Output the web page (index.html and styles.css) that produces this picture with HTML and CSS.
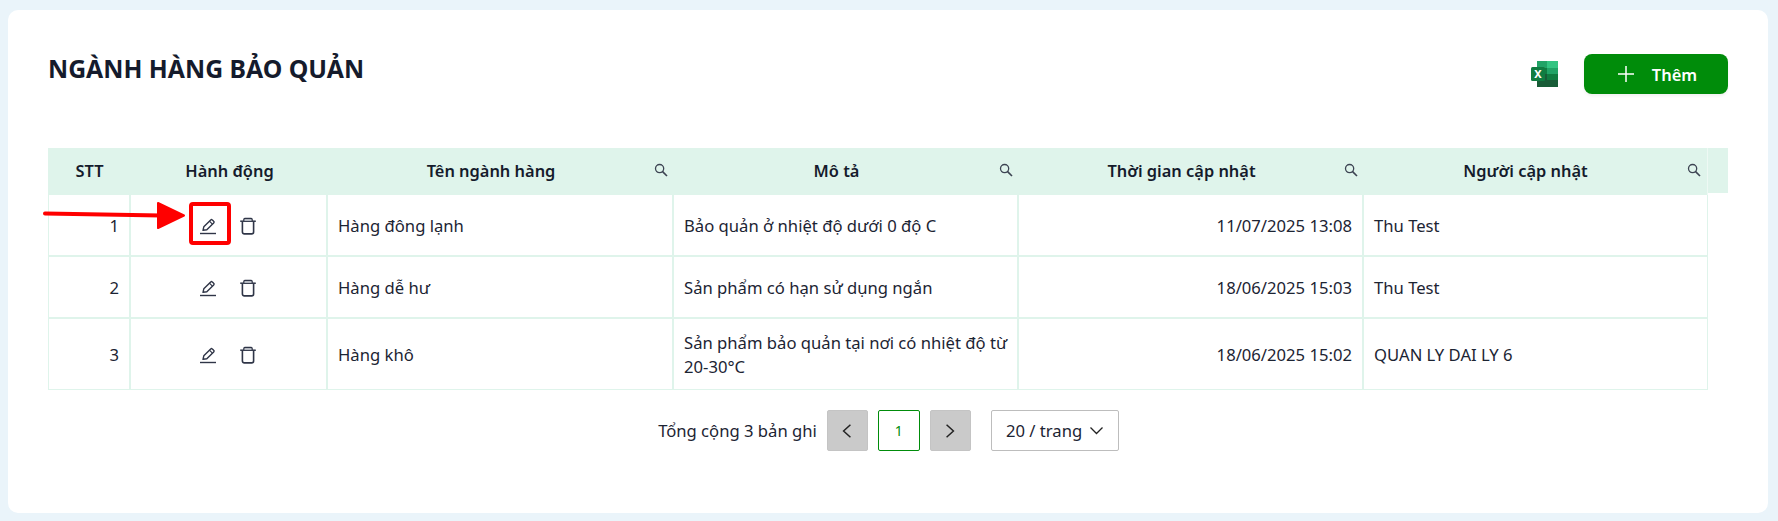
FILE: index.html
```html
<!DOCTYPE html>
<html lang="vi">
<head>
<meta charset="utf-8">
<title>Ngành hàng bảo quản</title>
<link rel="stylesheet" href="styles.css">
</head>
<body>
<svg class="defs" width="0" height="0" aria-hidden="true">
  <symbol id="i-search" viewBox="0 0 14 14"><circle cx="5.6" cy="5.6" r="4.1" fill="none" stroke="currentColor" stroke-width="1.3"/><path d="M8.600 8.600 13 13" stroke="currentColor" stroke-width="1.600" fill="none"/></symbol>
  <symbol id="i-edit" viewBox="0 0 18 18"><path d="M1 16.500H17" stroke="currentColor" stroke-width="1.400" fill="none"/><path d="M4 13.300 4.800 9.800 11.700 2.900a1.100 1.100 0 0 1 1.600 0l1.400 1.400a1.100 1.100 0 0 1 0 1.600L7.800 12.700Z" stroke="currentColor" stroke-width="1.400" fill="none" stroke-linejoin="round"/><path d="M10.400 4.200 13.400 7.200" stroke="currentColor" stroke-width="1.200"/></symbol>
  <symbol id="i-trash" viewBox="0 0 18 18"><path d="M1.200 4.200H16.800" stroke="currentColor" stroke-width="1.500" fill="none"/><path d="M4.800 4V2.400A1 1 0 0 1 5.800 1.400H12.200A1 1 0 0 1 13.200 2.400V4" fill="#b4b8c0" stroke="currentColor" stroke-width="1.200"/><path d="M3.400 4.400V15A1.900 1.900 0 0 0 5.300 16.900H12.700A1.900 1.900 0 0 0 14.600 15V4.400" stroke="currentColor" stroke-width="1.600" fill="none"/></symbol>
</svg>
<main class="card">
  <header class="top">
    <h1 class="title">NGÀNH HÀNG BẢO QUẢN</h1>
    <div class="actions">
      <svg class="excel" viewBox="0 0 27 26" aria-label="Excel">
        <rect x="6" y="0" width="21" height="26" rx="1.500" fill="#21a366"/>
        <rect x="16" y="0" width="11" height="7" fill="#33c481"/>
        <rect x="6" y="0" width="10" height="7" fill="#21a366"/>
        <rect x="16" y="7" width="11" height="6" fill="#21a366"/>
        <rect x="6" y="7" width="10" height="6" fill="#107c41"/>
        <rect x="16" y="13" width="11" height="6" fill="#107c41"/>
        <rect x="6" y="13" width="10" height="6" fill="#185c37"/>
        <rect x="6" y="19" width="21" height="7" fill="#185c37"/>
        <rect x="0" y="6" width="14" height="14" rx="1.500" fill="#107c41"/>
        <text x="7" y="17" class="excel-x">X</text>
      </svg>
      <button class="add" type="button">
        <svg class="plus" viewBox="0 0 16 16"><path d="M8 0V16M0 8H16" stroke="#fff" stroke-width="1.500"/></svg>
        <span>Thêm</span>
      </button>
    </div>
  </header>

  <table class="grid">
    <colgroup>
      <col class="c-stt"><col class="c-act"><col class="c-name"><col class="c-desc"><col class="c-time"><col class="c-user"><col class="c-gap">
    </colgroup>
    <thead>
      <tr>
        <th>STT</th>
        <th>Hành động</th>
        <th><span>Tên ngành hàng</span><svg class="search"><use href="#i-search"/></svg></th>
        <th><span>Mô tả</span><svg class="search"><use href="#i-search"/></svg></th>
        <th><span>Thời gian cập nhật</span><svg class="search"><use href="#i-search"/></svg></th>
        <th class="last"><span>Người cập nhật</span><svg class="search"><use href="#i-search"/></svg></th>
        <th class="gap"></th>
      </tr>
    </thead>
    <tbody>
      <tr class="r1">
        <td class="num">1</td>
        <td class="ops"><div class="ops-in"><svg class="ic"><use href="#i-edit"/></svg><svg class="ic"><use href="#i-trash"/></svg></div></td>
        <td>Hàng đông lạnh</td>
        <td>Bảo quản ở nhiệt độ dưới 0 độ C</td>
        <td class="num">11/07/2025 13:08</td>
        <td>Thu Test</td>
      </tr>
      <tr class="r2">
        <td class="num">2</td>
        <td class="ops"><div class="ops-in"><svg class="ic"><use href="#i-edit"/></svg><svg class="ic"><use href="#i-trash"/></svg></div></td>
        <td>Hàng dễ hư</td>
        <td>Sản phẩm có hạn sử dụng ngắn</td>
        <td class="num">18/06/2025 15:03</td>
        <td>Thu Test</td>
      </tr>
      <tr class="r3">
        <td class="num">3</td>
        <td class="ops"><div class="ops-in"><svg class="ic"><use href="#i-edit"/></svg><svg class="ic"><use href="#i-trash"/></svg></div></td>
        <td>Hàng khô</td>
        <td>Sản phẩm bảo quản tại nơi có nhiệt độ từ 20-30°C</td>
        <td class="num">18/06/2025 15:02</td>
        <td>QUAN LY DAI LY 6</td>
      </tr>
    </tbody>
  </table>

  <nav class="pager">
    <span class="total">Tổng cộng 3 bản ghi</span>
    <button class="pg nav" type="button"><svg viewBox="0 0 12 14"><path d="M9 1.500 3 7l6 5.500" fill="none" stroke="#222" stroke-width="1.300"/></svg></button>
    <button class="pg current" type="button">1</button>
    <button class="pg nav" type="button"><svg viewBox="0 0 12 14"><path d="M3 1.500 9 7l-6 5.500" fill="none" stroke="#222" stroke-width="1.300"/></svg></button>
    <button class="size" type="button"><span>20 / trang</span><svg viewBox="0 0 14 10"><path d="M1 1.500 7 7.500l6-6" fill="none" stroke="#222" stroke-width="1.300"/></svg></button>
  </nav>

  <svg class="note" viewBox="0 0 240 60" aria-hidden="true">
    <path d="M2 13.500 118 15.500" stroke="#f00" stroke-width="4" stroke-linecap="round"/>
    <path d="M115 3 141 15.500 115 28Z" fill="#f00" stroke="#f00" stroke-width="2" stroke-linejoin="round"/>
    <rect x="148" y="4" width="38" height="39" rx="2" fill="none" stroke="#f00" stroke-width="4"/>
  </svg>
</main>
</body>
</html>
```

FILE: styles.css
```css
* { box-sizing: border-box; }
html, body { height: 100%; }
body {
  margin: 0;
  padding: 10px 10px 8px 8px;
  background: #eaf4fa;
  font-family: "Noto Sans", "Open Sans", sans-serif;
  font-size: 16.65px;
  color: #1c2433;
  overflow: hidden;
}
.defs { position: absolute; }
.card {
  position: relative;
  height: 503px;
  background: #fff;
  border-radius: 10px;
  padding: 44px 40px 0;
}
.top {
  display: flex;
  justify-content: space-between;
  align-items: flex-start;
  height: 94px;
}
.title {
  margin: 0;
  font-size: 24.8px;
  line-height: 28px;
  font-weight: 700;
  color: #151b2c;
}
.actions {
  display: flex;
  align-items: center;
  gap: 26px;
}
.excel { width: 27px; height: 26px; display: block; }
.excel-x { font: 700 11px "Noto Sans", sans-serif; fill: #fff; text-anchor: middle; }
.add {
  display: flex;
  align-items: center;
  justify-content: center;
  gap: 18px;
  width: 144px;
  height: 40px;
  padding: 0 0 0 3px;
  border: 0;
  border-radius: 8px;
  background: #008c0a;
  color: #fff;
  font: 600 16.5px "Noto Sans", sans-serif;
  box-shadow: 0 2px 3px rgba(0, 0, 0, .06);
}
.plus { width: 16px; height: 16px; }

.grid {
  table-layout: fixed;
  width: 1680px;
  border-collapse: separate;
  border-spacing: 0;
}
.c-stt { width: 83px; }
.c-act { width: 197px; }
.c-name { width: 346px; }
.c-desc { width: 345px; }
.c-time { width: 345px; }
.c-user { width: 344px; }
.c-gap { width: 20px; }

th {
  position: relative;
  height: 47px;
  padding: 0 28px 2px 8px;
  background: #dff4eb;
  font-weight: 600;
  font-size: 16.4px;
  text-align: center;
  color: #151b2c;
}
th:nth-child(-n+2) { padding: 0 0 2px; }
th.last { border-right: 1px solid #eef9f4; }
th.gap { background: linear-gradient(#dff4eb 45px, #fff 45px); padding: 0; }
.search {
  position: absolute;
  right: 6px;
  top: 15px;
  width: 14px;
  height: 14px;
  color: #3c4352;
}
td {
  padding: 8px 7px 8px 10px;
  border: 1px solid #dff4eb;
  border-top: 0;
  border-left: 0;
  line-height: 24px;
  border-right-width: 2px;
}
td:first-child { border-left: 1px solid #dff4eb; }
td:last-child { border-right-width: 1px; }
tbody tr td { border-bottom-width: 2px; }
tbody tr:last-child td { border-bottom-width: 1px; }
.r1 td, .r2 td { height: 62px; padding-top: 9px; padding-bottom: 7px; }
.r3 td { height: 71px; padding-top: 9px; padding-bottom: 7px; }
td.num { text-align: right; padding-right: 10px; }
.ops-in {
  display: flex;
  justify-content: center;
  gap: 22px;
  padding-right: 4px;
}
.ic { width: 18px; height: 18px; color: #2f3547; display: block; }

.pager {
  display: flex;
  justify-content: center;
  align-items: center;
  gap: 10px;
  margin-top: 20px;
  height: 41px;
  padding-left: 1px;
}
.pg {
  display: flex;
  align-items: center;
  justify-content: center;
  width: 41px;
  height: 41px;
  padding: 0;
  border-radius: 2px;
  background: #fff;
  font: 14px "Noto Sans", sans-serif;
}
.pg svg { width: 14px; height: 16px; }
.nav { background: #cacaca; border: 1px solid #c4c4c4; }
.current { width: 42px; border: 1px solid #008c0a; color: #008c0a; }
.size {
  display: flex;
  align-items: center;
  justify-content: space-between;
  width: 128px;
  height: 41px;
  margin-left: 10px;
  padding: 0 14px;
  background: #fff;
  border: 1px solid #bdbdbd;
  border-radius: 2px;
  color: #1c2433;
  font: 16.65px "Noto Sans", sans-serif;
}
.size svg { width: 15px; height: 10px; }

.note {
  position: absolute;
  left: 35px;
  top: 190px;
  width: 240px;
  height: 60px;
  pointer-events: none;
}
```
